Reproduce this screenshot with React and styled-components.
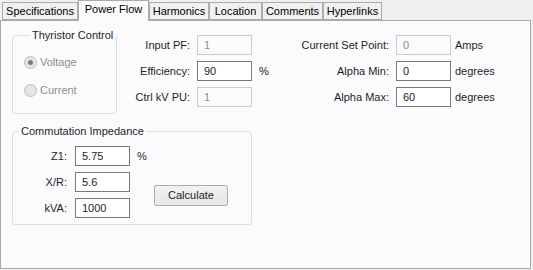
import React from 'react';
import styled, { createGlobalStyle } from 'styled-components';

const GlobalStyle = createGlobalStyle`
  html, body {
    margin: 0;
    padding: 0;
    background: #f0f0f0;
    font-family: 'Liberation Sans', Arial, sans-serif;
    font-size: 11px;
    color: #1e1e1e;
  }
`;

const Window = styled.div`
  width: 533px;
  height: 270px;
  display: flex;
  flex-direction: column;
`;

const TabStrip = styled.div`
  display: flex;
  align-items: flex-end;
  height: 20px;
  padding-left: 2px;
  position: relative;
  z-index: 1;
`;

const Tab = styled.div`
  box-sizing: border-box;
  width: ${(p) => p.$w}px;
  height: ${(p) => (p.$active ? 21 : 18)}px;
  margin-bottom: ${(p) => (p.$active ? -1 : 0)}px;
  border: 1px solid #acacac;
  border-bottom: ${(p) => (p.$active ? 'none' : '1px solid #acacac')};
  background: ${(p) => (p.$active ? '#fbfbfd' : '#f0f0f0')};
  display: flex;
  justify-content: center;
  padding-top: 2px;
  color: #000;
  font-size: 11px;
  white-space: nowrap;
`;

const Panel = styled.div`
  box-sizing: border-box;
  width: 531px;
  height: 249px;
  border: 1px solid #a8a8a8;
  background: #fbfbfd;
  padding: 8px 0 0 11px;
`;

const TopRow = styled.div`
  display: flex;
  align-items: flex-start;
`;

const Group = styled.fieldset`
  box-sizing: border-box;
  margin: 0;
  margin-top: ${(p) => p.$top || 0}px;
  width: ${(p) => p.$w}px;
  border: 1px solid #dcdcdc;
  border-radius: 3px;
  padding: ${(p) => p.$pad};
  min-inline-size: 0;
`;

const Legend = styled.legend`
  margin-left: 6px;
  padding: 0 2px;
  line-height: 13px;
  color: #1e1e1e;
`;

const RadioRow = styled.label`
  display: flex;
  align-items: center;
  height: 14px;
  gap: 3px;
  color: #8d8d8d;
  & + & {
    margin-top: 14px;
  }
`;

const RadioDot = styled.span`
  box-sizing: border-box;
  width: 13px;
  height: 13px;
  border-radius: 50%;
  border: 1px solid #bcbcbc;
  background: #e6e6e6;
  display: flex;
  align-items: center;
  justify-content: center;
  &::after {
    content: '';
    width: 5px;
    height: 5px;
    border-radius: 50%;
    background: ${(p) => (p.$checked ? '#7a7a7a' : 'transparent')};
  }
`;

const FieldGrid = styled.div`
  display: grid;
  grid-template-columns: ${(p) => p.$cols};
  grid-auto-rows: 20px;
  row-gap: 6px;
  align-items: center;
  margin-top: ${(p) => p.$top || 0}px;
`;

const Label = styled.span`
  grid-column: 1;
  text-align: right;
  padding-right: ${(p) => p.$gap ?? 7}px;
  white-space: nowrap;
`;

const Unit = styled.span`
  padding-left: ${(p) => p.$gap ?? 7}px;
  white-space: nowrap;
`;

const Input = styled.div`
  box-sizing: border-box;
  height: 20px;
  border: 1px solid ${(p) => (p.$disabled ? '#cccccc' : '#7a7a7a')};
  background: ${(p) => (p.$disabled ? '#fbfbfd' : '#ffffff')};
  color: ${(p) => (p.$disabled ? '#8d8d8d' : '#1e1e1e')};
  padding: 0 6px;
  display: flex;
  align-items: center;
`;

const Button = styled.div`
  box-sizing: border-box;
  grid-column: 4;
  grid-row: 2 / span 2;
  align-self: center;
  width: 74px;
  height: 21px;
  border: 1px solid #adadad;
  border-radius: 2px;
  background: linear-gradient(#f2f2f2, #e6e6e6);
  display: flex;
  align-items: center;
  justify-content: center;
  color: #1e1e1e;
`;

const tabs = [
  { name: 'Specifications', w: 76 },
  { name: 'Power Flow', w: 71, active: true },
  { name: 'Harmonics', w: 60 },
  { name: 'Location', w: 53 },
  { name: 'Comments', w: 61 },
  { name: 'Hyperlinks', w: 59 },
];

export default function App() {
  return (
    <Window>
      <GlobalStyle />
      <TabStrip>
        {tabs.map((t) => (
          <Tab key={t.name} $w={t.w} $active={t.active}>
            {t.name}
          </Tab>
        ))}
      </TabStrip>
      <Panel>
        <TopRow>
          <Group $w={105} $pad="13px 0 16px 11px">
            <Legend>Thyristor Control</Legend>
            <RadioRow>
              <RadioDot $checked />
              Voltage
            </RadioRow>
            <RadioRow>
              <RadioDot />
              Current
            </RadioRow>
          </Group>

          <FieldGrid $cols="80px 55px 30px" $top={6}>
            <Label>Input PF:</Label>
            <Input $disabled>1</Input>
            <Label>Efficiency:</Label>
            <Input>90</Input>
            <Unit>%</Unit>
            <Label>Ctrl kV PU:</Label>
            <Input $disabled>1</Input>
          </FieldGrid>

          <FieldGrid $cols="114px 55px auto" $top={6}>
            <Label>Current Set Point:</Label>
            <Input $disabled>0</Input>
            <Unit $gap={4}>Amps</Unit>
            <Label>Alpha Min:</Label>
            <Input>0</Input>
            <Unit $gap={4}>degrees</Unit>
            <Label>Alpha Max:</Label>
            <Input>60</Input>
            <Unit $gap={4}>degrees</Unit>
          </FieldGrid>
        </TopRow>

        <Group $w={240} $pad="8px 0 6px 0" $top={11}>
          <Legend>Commutation Impedance</Legend>
          <FieldGrid $cols="62px 55px 24px auto">
            <Label $gap={8}>Z1:</Label>
            <Input>5.75</Input>
            <Unit $gap={7}>%</Unit>
            <Label $gap={8}>X/R:</Label>
            <Input>5.6</Input>
            <Button>Calculate</Button>
            <Label $gap={8}>kVA:</Label>
            <Input>1000</Input>
          </FieldGrid>
        </Group>
      </Panel>
    </Window>
  );
}
